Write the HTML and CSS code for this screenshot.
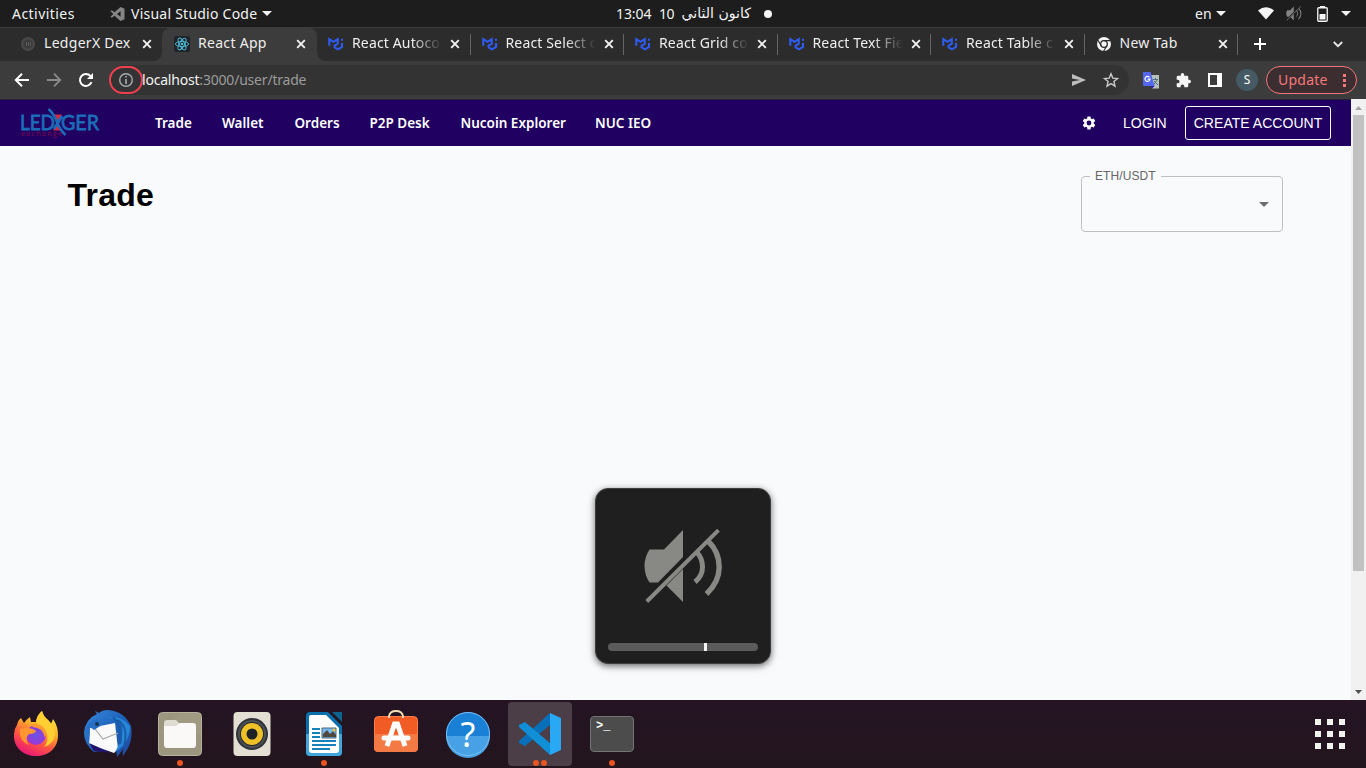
FILE: index.html
```html
<!DOCTYPE html>
<html lang="en">
<head>
<meta charset="utf-8">
<title>React App</title>
<link rel="stylesheet" href="styles.css">
</head>
<body>
<svg class="defs" width="0" height="0">
  <defs>
    <symbol id="mui" viewBox="0 0 16 16"><path d="M1.300 9.800V3.200L5.500 5.800L9.700 3.200V7.800L6.600 9.700V11.400L10 13.300L14 11V7M14 2.800V4.800" fill="none" stroke="#2f5bf0" stroke-width="2.100"/></symbol>
    <symbol id="x" viewBox="0 0 10 10"><path d="M1.2 1.2L8.8 8.8M8.8 1.2L1.2 8.8" fill="none" stroke="#f2f2f2" stroke-width="1.9"/></symbol>
    <symbol id="caret" viewBox="0 0 10 5"><path d="M0 0H10L5 5Z" fill="#f2f2f2"/></symbol>
    <symbol id="muted" viewBox="0 0 80 76">
      <path d="M5.500 21.500H20L39 2V29L14 54.500H5.500Q.5 47 .5 38T5.500 21.500ZM22.500 57.500L39 41V74Z"/>
      <path d="M2.800 73.500L74.500 2.200" fill="none" stroke="currentColor" stroke-width="4"/>
      <path d="M52.500 24Q58.500 30 58.500 39T51 54" fill="none" stroke="currentColor" stroke-width="5"/>
      <path d="M64.500 13.500Q75.200 24 75.200 39T62.500 66" fill="none" stroke="currentColor" stroke-width="5.400"/>
    </symbol>
  </defs>
</svg>

<header class="topbar">
  <span class="t activities">Activities</span>
  <svg class="vs-mini" width="15" height="14" viewBox="0 0 100 100"><path d="M72 0L100 12V88L72 100L28 62L10 76L0 70L20 50L0 30L10 24L28 38ZM72 30L46 50L72 70Z" fill="#858585" fill-rule="evenodd"/></svg>
  <span class="t appname">Visual Studio Code</span>
  <svg class="caret-app" width="10" height="5"><use href="#caret"/></svg>
  <span class="clock"><span class="t time">13:04</span><span class="t day">10</span><bdi class="t month" dir="rtl" lang="ar">كانون الثاني</bdi><i class="dot"></i></span>
  <span class="tray">
    <span class="t lang">en</span>
    <svg class="caret-lang" width="10" height="5"><use href="#caret"/></svg>
    <svg class="wifi" width="16" height="13" viewBox="0 0 16 13"><path d="M0 3.500Q8-3 16 3.500L8 12.500Z" fill="#f5f5f5"/></svg>
    <svg class="mute-mini" width="16" height="15"><use href="#muted"/></svg>
    <svg class="battery" width="11" height="16" viewBox="0 0 11 16"><path d="M3 0H8V2H3Z" fill="#f5f5f5"/><rect x=".75" y="1.750" width="9.500" height="13.500" rx="1" fill="none" stroke="#f5f5f5" stroke-width="1.300"/><path d="M2.500 8H8.500V13.500H2.500Z" fill="#f5f5f5"/></svg>
    <svg class="caret-sys" width="10" height="5"><use href="#caret"/></svg>
  </span>
</header>

<div class="tabs">
  <div class="tab first">
    <svg width="16" height="16" viewBox="0 0 16 16"><circle cx="8" cy="8" r="7" fill="#484848"/><circle cx="8" cy="8" r="4.500" fill="#3a3a3a"/><path d="M6.500 6V10M8.500 6V10M10.500 6V10" stroke="#666" stroke-width=".8"/></svg>
    <span class="t title w1">LedgerX Dex</span><svg class="close" width="10" height="10"><use href="#x"/></svg>
  </div>
  <div class="tab active">
    <svg width="16" height="16" viewBox="0 0 16 16"><rect width="16" height="16" rx="2" fill="#20232a"/><g fill="none" stroke="#4fc0d8" stroke-width=".9"><ellipse cx="8" cy="8" rx="6.600" ry="2.600"/><ellipse cx="8" cy="8" rx="6.600" ry="2.600" transform="rotate(60 8 8)"/><ellipse cx="8" cy="8" rx="6.600" ry="2.600" transform="rotate(120 8 8)"/></g><circle cx="8" cy="8" r="1.300" fill="#4fc0d8"/></svg>
    <span class="t title w2">React App</span><svg class="close" width="10" height="10"><use href="#x"/></svg>
  </div>
  <div class="tab"><svg width="16" height="16"><use href="#mui"/></svg><span class="t title fade">React Autoco</span><svg class="close" width="10" height="10"><use href="#x"/></svg></div>
  <div class="tab"><svg width="16" height="16"><use href="#mui"/></svg><span class="t title fade">React Select c</span><svg class="close" width="10" height="10"><use href="#x"/></svg></div>
  <div class="tab"><svg width="16" height="16"><use href="#mui"/></svg><span class="t title fade">React Grid co</span><svg class="close" width="10" height="10"><use href="#x"/></svg></div>
  <div class="tab"><svg width="16" height="16"><use href="#mui"/></svg><span class="t title fade">React Text Fie</span><svg class="close" width="10" height="10"><use href="#x"/></svg></div>
  <div class="tab"><svg width="16" height="16"><use href="#mui"/></svg><span class="t title fade">React Table c</span><svg class="close" width="10" height="10"><use href="#x"/></svg></div>
  <div class="tab">
    <svg width="16" height="16" viewBox="0 0 16 16"><circle cx="8" cy="8" r="7" fill="#f4f4f4"/><circle cx="8" cy="8" r="3.300" fill="none" stroke="#2c2c2c" stroke-width="1.300"/><path d="M8 4.700H14.500M5.200 9.700L2 4.200M10.900 9.700L7.700 15" stroke="#2c2c2c" stroke-width="1.200"/></svg>
    <span class="t title w3">New Tab</span><svg class="close" width="10" height="10"><use href="#x"/></svg>
  </div>
  <svg class="plus" width="12" height="12" viewBox="0 0 12 12"><path d="M6 0V12M0 6H12" stroke="#fff" stroke-width="2"/></svg>
  <svg class="chev" width="10" height="7" viewBox="0 0 10 7"><path d="M.8 1L5 5.200L9.200 1" fill="none" stroke="#e8e8e8" stroke-width="1.800"/></svg>
</div>

<div class="toolbar">
  <svg class="back" width="16" height="16" viewBox="0 0 16 16"><path d="M15 8H2M8 1.700L1.800 8L8 14.300" fill="none" stroke="#fff" stroke-width="2"/></svg>
  <svg class="fwd" width="16" height="16" viewBox="0 0 16 16"><path d="M1 8H14M8 1.700L14.200 8L8 14.300" fill="none" stroke="#8a8a8a" stroke-width="1.800"/></svg>
  <svg class="reload" width="16" height="16" viewBox="0 0 16 16"><path d="M13.500 10.200A6 6 0 1 1 12.500 4" fill="none" stroke="#fff" stroke-width="2"/><path d="M15 1V7H9Z" fill="#fff"/></svg>
  <div class="omnibox">
    <span class="info"><svg width="16" height="16" viewBox="0 0 16 16"><circle cx="8" cy="8" r="6.300" fill="none" stroke="#a9adb2" stroke-width="1.400"/><path d="M8 4V5.600M8 7V12" stroke="#a9adb2" stroke-width="1.600"/></svg></span>
    <span class="t url"><b>localhost</b>:3000/user/trade</span>
    <svg class="send" width="14" height="12" viewBox="0 0 14 12"><path d="M0 0L14 6L0 12V7.500L8 6L0 4.500Z" fill="#bdbdbd"/></svg>
    <svg class="star" width="16" height="16" viewBox="0 0 16 16"><path d="M8 1.800L9.800 6.100L14.500 6.500L10.900 9.500L12 14.200L8 11.700L4 14.200L5.100 9.500L1.500 6.500L6.200 6.100Z" fill="none" stroke="#c8c8c8" stroke-width="1.400"/></svg>
  </div>
  <svg class="translate" width="17" height="17" viewBox="0 0 17 17"><path d="M8 3H16V16.500H9Z" fill="#b5bfbd"/><path d="M10 7.500H15M12.500 6V8M10.500 13L14 8M11 9L15 13" stroke="#527079" fill="none"/><path d="M0 0H7.500L11.500 14H1Q0 14 0 13Z" fill="#5368ef"/><path d="M8 14H11.500L9 16.500Z" fill="#2810b5"/><path d="M6.500 5.400A2.500 2.500 0 1 0 7 7.200H4.700" fill="none" stroke="#fff" stroke-width="1.200"/></svg>
  <svg class="puzzle" width="15" height="15" viewBox="0 0 22 22"><path d="M19.500 10H18V6Q18 4 16 4H12V2.500A2.500 2.500 0 0 0 7 2.500V4H3Q1 4 1 6V9.800H2.500A2.700 2.700 0 0 1 2.500 15.200H1V19Q1 21 3 21H6.800V19.500A2.700 2.700 0 0 1 12.200 19.500V21H16Q18 21 18 19V15H19.500A2.500 2.500 0 0 0 19.500 10Z" fill="#f5f5f5"/></svg>
  <svg class="panel" width="14" height="14" viewBox="0 0 14 14"><path d="M0 0H14V14H0ZM2 2V12H9V2Z" fill="#fff" fill-rule="evenodd"/></svg>
  <span class="avatar t">S</span>
  <span class="update"><span class="t">Update</span><svg width="3" height="13" viewBox="0 0 3 13"><path d="M0 0H3V3H0ZM0 5H3V8H0ZM0 10H3V13H0Z" fill="#f4787b"/></svg></span>
</div>

<div class="viewport">
  <div class="page">
    <nav class="nav">
      <svg class="logo" width="82" height="32" viewBox="0 0 82 32">
        <path d="M34 7.500H42L38 14ZM33 23.500H42L38 16Z" fill="#df263f"/>
        <text x="0" y="22.500" class="logo-main" textLength="35" lengthAdjust="spacingAndGlyphs">LED</text>
        <text x="41" y="22.500" class="logo-main" textLength="38" lengthAdjust="spacingAndGlyphs">GER</text>
        <path d="M28.500 2Q34 7 37 15T45.500 28" fill="none" stroke="#1b6db8" stroke-width="2.600"/>
        <path d="M42 9L34 22" stroke="#1b6db8" stroke-width="2.800"/>
        <text x="1" y="29" class="logo-sub" textLength="41">exchange</text>
      </svg>
      <a class="t n1">Trade</a><a class="t n2">Wallet</a><a class="t n3">Orders</a><a class="t n4">P2P Desk</a><a class="t n5">Nucoin Explorer</a><a class="t n6">NUC IEO</a>
      <svg class="gear" width="16" height="16" viewBox="0 0 24 24"><path fill="#fff" d="M19.140 12.940c.04-.3.060-.61.060-.94s-.02-.64-.07-.94l2.030-1.580a.49.490 0 0 0 .12-.61l-1.920-3.320a.49.490 0 0 0-.59-.22l-2.390.96c-.5-.38-1.030-.7-1.620-.94l-.36-2.540A.48.480 0 0 0 13.920 2.400h-3.840c-.24 0-.43.170-.47.410l-.36 2.540c-.59.240-1.130.57-1.620.94l-2.390-.96a.49.490 0 0 0-.59.220L2.740 8.870a.48.480 0 0 0 .12.610l2.030 1.580c-.05.3-.09.630-.09.940s.02.640.07.940l-2.030 1.580a.49.490 0 0 0-.12.610l1.920 3.320c.12.220.37.290.59.220l2.390-.96c.5.380 1.030.7 1.620.94l.36 2.540c.05.240.24.410.48.410h3.840c.24 0 .44-.17.470-.41l.36-2.540c.59-.24 1.130-.56 1.620-.94l2.390.96c.22.080.47 0 .59-.22l1.920-3.320a.48.480 0 0 0-.12-.61ZM12 15.600A3.600 3.600 0 1 1 12 8.400a3.600 3.600 0 0 1 0 7.200Z"/></svg>
      <a class="login">LOGIN</a><a class="create">CREATE ACCOUNT</a>
    </nav>
    <main class="content">
      <h1>Trade</h1>
      <fieldset class="select"><legend>ETH/USDT</legend><svg width="10" height="5" viewBox="0 0 10 5"><path d="M0 0H10L5 5Z" fill="#6b6d6f"/></svg></fieldset>
    </main>
  </div>
  <div class="scroll">
    <svg width="7" height="4" viewBox="0 0 7 4"><path d="M0 4H7L3.500 0Z" fill="#a3a3a3"/></svg>
    <i class="thumb"></i>
    <svg width="7" height="4" viewBox="0 0 7 4"><path d="M0 0H7L3.500 4Z" fill="#505050"/></svg>
  </div>
</div>

<footer class="dock">
  <div class="app"><svg width="48" height="48" viewBox="0 0 48 48"><defs><linearGradient id="ff" x1=".8" y1="0" x2=".3" y2="1"><stop offset="0" stop-color="#fff044"/><stop offset=".35" stop-color="#ffb62a"/><stop offset=".65" stop-color="#ff5840"/><stop offset="1" stop-color="#e91478"/></linearGradient><radialGradient id="fp"><stop offset="0" stop-color="#6855e8"/><stop offset="1" stop-color="#9b37d5"/></radialGradient></defs><path d="M5 15Q6 10 9 8L12 13Q15 9 18 7L19 12H24Q25 5 30 1Q31 6 36 10L39 14L41 9Q46 16 46 25C46 39 36 46 24 46S1 38 2 24Q2 19 5 15Z" fill="url(#ff)"/><path d="M24 12Q25 5 30 1Q31 6 36 10Q42 15 43 24Q42 34 32 37Q37 31 35 24Q33 17 29 16Z" fill="#ffcf34"/><circle cx="24" cy="25" r="10" fill="url(#fp)"/><path d="M8 19Q18 16 24 21Q23 24 17 24Q12 28 17 35Q6 30 8 19Z" fill="#ff9630"/><path d="M23 13L30 16Q36 22 33 28Q31 17 20 17Z" fill="#ff9b2c"/></svg></div>
  <div class="app"><svg width="48" height="48" viewBox="0 0 48 48"><defs><linearGradient id="tb" x2="1" y2="1"><stop stop-color="#3b89df"/><stop offset=".5" stop-color="#1c61b8"/><stop offset="1" stop-color="#2449a2"/></linearGradient></defs><path d="M15 3Q18 0 24 0Q40 1 47 16Q49 28 44 38L39 46Q38 42 40 38L33 47L32 39L10 42Q0 34 0 23Q1 9 13 4L11 1Z" fill="url(#tb)"/><path d="M6 18L31 13L34 39L30 43L5 34Z" fill="#fafafa"/><path d="M8 15L19 29L34 23" fill="none" stroke="#aaa" stroke-width="1.200"/><path d="M21 8Q35 6 38 16Q40 27 31 42Q46 33 46 16Q36 4 21 8Z" fill="#2787d7"/><path d="M34 10Q45 18 40 36M29 7Q40 18 36 34" fill="none" stroke="#195ca9" stroke-width="2"/><path d="M2 20Q4 11 13 9L18 15L10 20L6 17L5 34Q1 29 2 20Z" fill="#276fc5"/><circle cx="13" cy="14" r="2" fill="#183451"/><path d="M5 33L27 43L10 41Z" fill="#23136d"/></svg></div>
  <div class="app"><svg width="48" height="48" viewBox="0 0 48 48"><rect x="2.500" y="2.500" width="43" height="43" rx="4" fill="#9d967f" stroke="#b7b19e"/><path d="M3 24L24 3H43L45 5V24Z" fill="#aaa38d" opacity=".35"/><path d="M8 13Q8 10 11 10H20L24 14H34V21H8Z" fill="#dedbd0"/><path d="M8 16H20L24 13H37Q40 13 40 16V35Q40 38 37 38H11Q8 38 8 35Z" fill="#faf9f7"/></svg><i></i></div>
  <div class="app"><svg width="48" height="48" viewBox="0 0 48 48"><rect x="5.500" y="2" width="37" height="44" rx="4" fill="#e3dfd3"/><circle cx="24" cy="24" r="16" fill="#303338"/><circle cx="24" cy="24" r="14" fill="#4b5057"/><circle cx="24" cy="24" r="12" fill="#24272a"/><circle cx="24" cy="24" r="11" fill="#efc128"/><circle cx="24" cy="24" r="5.500" fill="#1d2327"/></svg></div>
  <div class="app"><svg width="48" height="48" viewBox="0 0 48 48"><path d="M10 2H28L42 16V42Q42 46 38 46H10Q6 46 6 42V6Q6 2 10 2Z" fill="#0871ad"/><path d="M6 24H42V42Q42 46 38 46H10Q6 46 6 42Z" fill="#42a6dc"/><path d="M11 5H26L39 18V40Q39 43 36 43H12Q9 43 9 40V7Q9 5 11 5Z" fill="#fff"/><path d="M32 2H42V12Z" fill="#0e638e"/><path d="M12 19H20M12 23H20M12 27H20M12 31H36M12 35H36M12 39H30" stroke="#1681bd" stroke-width="2"/><path d="M22 18H36V28H22Z" fill="#75baf0" stroke="#4f6576"/><path d="M23 27V24L27 20L30 24L33 21L36 25V27Z" fill="#50483e"/><circle cx="34" cy="20" r="1.500" fill="#f3c72e"/></svg><i></i></div>
  <div class="app"><svg width="48" height="48" viewBox="0 0 48 48"><rect x="2.500" y="6.500" width="43" height="35" rx="4" fill="#f15b24" stroke="#f7814e"/><path d="M2 24H46V38Q46 42 42 42H6Q2 42 2 38Z" fill="#f47a45"/><path d="M15 36L22.500 14H25.500L33 36" fill="none" stroke="#fff" stroke-width="5"/><path d="M12 28H36" stroke="#fff" stroke-width="5" stroke-linecap="round"/><path d="M17 8V6Q18 1 24 1T31 6V8" fill="none" stroke="#f2e1b7" stroke-width="1.800"/></svg></div>
  <div class="app help"><svg width="48" height="48" viewBox="0 0 48 48"><circle cx="24" cy="24" r="22" fill="#1980d5"/><path d="M2 26H46A22 22 0 0 1 2 26Z" fill="#47a1e4"/><circle cx="24" cy="24" r="21.500" fill="none" stroke="#79bdf0"/><text x="24" y="37" text-anchor="middle" class="q">?</text></svg></div>
  <div class="app current"><svg width="48" height="48" viewBox="0 0 48 48"><path d="M3 31L34 3L35 14L9 36L3 33Z" fill="#0870b8"/><path d="M3 17V15L9 12L35 34L34 45Z" fill="#108fd7"/><path d="M34 3L45 8V40L34 45Z" fill="#29a9f3"/></svg><i></i><i></i></div>
  <div class="app"><svg width="48" height="48" viewBox="0 0 48 48"><rect x="2.500" y="6.500" width="43" height="35" rx="3.500" fill="#4c4c4c" stroke="#737373"/><text x="8" y="18.500" class="prompt">&gt;_</text></svg><i></i></div>
  <svg class="grid" width="30" height="30" viewBox="0 0 30 30"><path stroke="#f2f2ef" stroke-width="6" stroke-dasharray="6 6" d="M0 3H30M0 15H30M0 27H30"/></svg>
</footer>

<div class="osd"><svg class="osd-icon" width="80" height="76"><use href="#muted"/></svg><div class="level"><i></i></div></div>
</body>
</html>
```
FILE: styles.css
```css
* { box-sizing: border-box; }
body { margin: 0; width: 1366px; height: 768px; overflow: hidden; display: flex; flex-direction: column; font-family: "Liberation Sans", Arial, sans-serif; background: #f8fafc; }
svg { display: block; flex: none; }
.defs { position: absolute; }
.t { font-family: "Noto Sans", "Open Sans", sans-serif; white-space: nowrap; flex: none; }
.topbar { height: 27px; flex: none; background: #1d1d1d; color: #f2f2f2; display: flex; align-items: center; font-size: 14px; }
.topbar .t { line-height: 27px; }
.activities { margin-left: 12px; width: 98px; letter-spacing: .45px; }
.appname { margin-left: 6px; width: 131px; letter-spacing: .24px; }
.clock { margin-left: 344px; display: flex; align-items: center; width: 156px; }
.time { width: 43px; letter-spacing: -.1px; }
.day { width: 21px; letter-spacing: -.4px; }
.month { width: 71px; font-family: "DejaVu Sans", sans-serif; font-size: 14.100px; }
.dot { width: 8px; height: 8px; margin-left: 13px; border-radius: 50%; background: #f5f5f5; }
.tray { margin-left: auto; display: flex; align-items: center; }
.lang { width: 21px; }
.wifi { margin-left: 32px; }
.mute-mini { margin-left: 12px; color: #828282; fill: currentColor; }
.battery { margin-left: 15px; }
.caret-sys { margin-left: 13px; margin-right: 15px; }
.tabs { height: 34px; flex: none; padding-left: 8px; background: #2c2c2c; border-top: 1px solid #3c3c3c; display: flex; }
.tab { width: 153.500px; flex: none; padding: 0 10px 1px 11px; display: flex; align-items: center; background: linear-gradient(#656565,#656565) right 6px / 1px 21px no-repeat; }
.tab.first { width: 154px; padding-left: 12px; background: none; }
.tab.active { width: 155px; padding-left: 12px; position: relative; background: #3c3c3c; border-radius: 8px 8px 0 0; }
.tab.active::before, .tab.active::after { content: ""; position: absolute; bottom: 0; width: 8px; height: 8px; }
.tab.active::before { left: -8px; background: radial-gradient(circle at 0 0, transparent 7.500px, #3c3c3c 8px); }
.tab.active::after { right: -8px; background: radial-gradient(circle at 100% 0, transparent 7.500px, #3c3c3c 8px); }
.title { margin-left: 8px; width: 90px; color: #eee; font-size: 14px; line-height: 30px; padding-bottom: 2px; letter-spacing: .3px; }
.fade { letter-spacing: .15px; -webkit-mask-image: linear-gradient(90deg,#000 60px,transparent 90px); mask-image: linear-gradient(90deg,#000 60px,transparent 90px); }
.close { margin-left: 8px; }
.plus { margin: 10px 0 0 16px; }
.chev { margin: 13px 0 0 67px; }
.toolbar { height: 38px; flex: none; background: #3c3c3c; display: flex; align-items: center; }
.back { margin-left: 14px; }
.fwd { margin-left: 16px; }
.reload { margin-left: 16px; }
.omnibox { margin-left: 15px; height: 30px; width: 1020px; border-radius: 15px; background: #333; display: flex; align-items: center; }
.info { width: 34px; height: 28px; border: 2px solid #f04050; border-radius: 14px; display: flex; align-items: center; justify-content: center; }
.url { font-size: 14px; letter-spacing: -.2px; color: #9b9b9b; width: 900px; margin-left: -1px; padding-bottom: 2px; }
.url b { font-weight: 400; color: #f2f2f2; }
.send { margin-left: 30px; }
.star { margin-left: 17px; }
.translate { margin-left: 14px; }
.puzzle { margin-left: 16px; }
.panel { margin-left: 17px; }
.avatar { width: 22px; height: 22px; margin-left: 14px; border-radius: 50%; background: #455a64; color: #fff; font-size: 12px; line-height: 22px; text-align: center; }
.update { width: 91px; height: 28px; margin-left: 8px; border: 1px solid #f4787b; border-radius: 14px; background: #3c2e30; color: #f4787b; font-size: 14px; display: flex; align-items: center; justify-content: space-between; padding: 0 10px 0 11px; }
.update .t { padding-bottom: 2px; letter-spacing: .25px; }
.viewport { height: 601px; flex: none; display: flex; }
.page { width: 1351px; display: flex; flex-direction: column; }
.nav { height: 47px; background: #200060; border-top: 1px solid #292239; color: #fff; display: flex; align-items: center; font-size: 14px; }
.nav .t { font-weight: 600; font-size: 13.500px; }
.logo { margin-left: 20px; }
.logo-main { font: 21px Lato, sans-serif; fill: #1b6db8; stroke: #1b6db8; stroke-width: .8px; }
.logo-sub { font: 7px "Open Sans", sans-serif; fill: #85004f; }
.n1 { margin-left: 53px; width: 67px; }
.n2 { width: 72.500px; }
.n3 { width: 75px; }
.n4 { width: 91px; }
.n5 { width: 134.500px; }
.n6 { width: 60px; }
.gear { margin-left: 426px; }
.login { margin-left: 26px; width: 44px; }
.create { margin-left: 18px; width: 146px; height: 34px; border: 1px solid #fff; border-radius: 3px; line-height: 33px; text-align: center; font-size: 14px; letter-spacing: .03px; white-space: nowrap; }
.content { flex: 1; padding: 23px 68px 0 67.500px; display: flex; justify-content: space-between; align-items: flex-start; }
h1 { margin: 7px 0 0; font-size: 32px; line-height: 38px; letter-spacing: .25px; color: #000; }
.select { margin: 0; width: 202px; height: 63px; padding: 0 13px 0 8px; border: 1px solid #bdbfc1; border-radius: 4px; display: flex; justify-content: flex-end; align-items: flex-start; }
.select legend { padding: 0 5px; font-size: 12px; line-height: 14px; letter-spacing: .1px; color: #666; }
.select svg { margin-top: 19px; }
.scroll { width: 15px; background: #f1f1f1; display: flex; flex-direction: column; align-items: center; padding: 7px 0 6px; }
.thumb { width: 11px; height: 456px; margin: 5px 0 auto; background: #c1c1c1; }
.dock { height: 68px; flex: none; background: linear-gradient(#241424,#23151d); display: flex; align-items: center; padding-left: 4px; gap: 8px; }
.app { width: 64px; height: 64px; position: relative; display: flex; justify-content: center; align-items: center; border-radius: 4px; }
.current { background: #4b3e47; }
.app i { position: absolute; left: 29px; bottom: 0; width: 6px; height: 6px; border-radius: 50%; background: #e95420; }
.current i { left: 25px; }
.current i + i { left: 33px; }
.q { font: 34px "Noto Sans", sans-serif; fill: #fff; }
.prompt { font: bold 12px "Liberation Mono", monospace; fill: #fff; }
.grid { margin: 0 21px 0 auto; }
.osd { position: absolute; left: 595px; top: 488px; width: 176px; height: 176px; padding: 40px 12px 12px; border: 1px solid #3d3d3d; border-radius: 13px; background: #1f1f1f; box-shadow: 0 2px 7px #0009; display: flex; flex-direction: column; justify-content: space-between; }
.osd-icon { margin: -1px 0 0 36px; color: #888885; fill: currentColor; }
.level { height: 8px; border-radius: 4px; background: #5b5b5b; }
.level i { display: block; margin-left: 95.500px; width: 3px; height: 8px; background: #f5f5f5; }
```
